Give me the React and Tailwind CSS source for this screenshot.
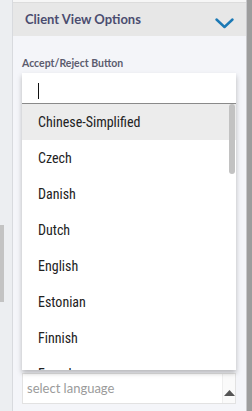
const languages = [
  "Chinese-Simplified",
  "Czech",
  "Danish",
  "Dutch",
  "English",
  "Estonian",
  "Finnish",
  "French",
];

export default function App() {
  return (
    <div
      className="flex h-[411px] w-[252px] overflow-hidden bg-[#eceef1]"
      style={{ fontFamily: "Lato, 'Open Sans', sans-serif" }}
    >
      {/* page scrollbar on the left */}
      <div className="flex w-[12px] flex-col">
        <div className="mt-[225px] h-[77px] w-[4px] bg-[#c3c3c3]" />
      </div>
      <div className="w-px bg-[#d8dade]" />

      <div className="flex flex-1 flex-col bg-[#f4f5f9]">
        <div className="h-[3px] border-b border-[#dcdcdc] bg-[#f6f6f6]" />
        <div className="flex h-[33px] items-center justify-between bg-[#e7e7e7] pl-[12px] pr-[12px]">
          <span className="text-[13px] font-bold text-[#4b4d70]">Client View Options</span>
          <svg width="19" height="11" viewBox="0 0 19 11" fill="none" className="mt-[7px]">
            <path d="M1.5 1.5 L9.5 9 L17.5 1.5" stroke="#1b79b5" strokeWidth="2.4" strokeLinecap="round" strokeLinejoin="round" />
          </svg>
        </div>

        <div className="flex flex-col pl-[9px] pr-[10px] pt-[19px]">
          <span className="text-[10.5px] font-bold leading-[16px] text-[#5b5c6e]">Accept/Reject Button</span>

          <div className="relative z-10 mt-[2px] flex h-[297px] flex-col bg-white shadow-[0_3px_5px_rgba(0,0,0,0.25)]">
            <div className="flex h-[31px] items-center border-b border-[#8a8a8a] pl-[16px]">
              <div className="mt-[5px] h-[16px] w-px bg-[#111]" />
            </div>
            <div className="relative flex-1 overflow-hidden">
              {languages.map((lang, i) => (
                <div
                  key={lang}
                  className={
                    "flex h-[36px] items-center pl-[16px] text-[14px] text-[#222] " +
                    (i === 0 ? "bg-[#ececec]" : "bg-white")
                  }
                  style={{ fontFamily: "'Roboto Condensed', Lato, sans-serif" }}
                >
                  {lang}
                </div>
              ))}
              <div className="absolute right-[1px] top-0 h-[70px] w-[6px] rounded-[3px] bg-[#c2c2c2]" />
            </div>
          </div>

          <div className="mt-[3px] flex h-[31px] items-center justify-between border border-[#e2e2e2] bg-white">
            <span className="pl-[4px] text-[13px] text-[#9b9b9b]">select language</span>
            <div className="flex h-full w-[13px] items-center justify-center border-l border-[#eeeeee] bg-[#fafafa]">
              <svg width="11" height="6" viewBox="0 0 11 6" className="mt-[8px]">
                <polygon points="0,6 5.5,0 11,6" fill="#555" />
              </svg>
            </div>
          </div>
        </div>
      </div>

      <div className="w-[1px] bg-[#c9c9cc]" />
      <div className="w-[5px] bg-[#9d9d9d]" />
    </div>
  );
}
